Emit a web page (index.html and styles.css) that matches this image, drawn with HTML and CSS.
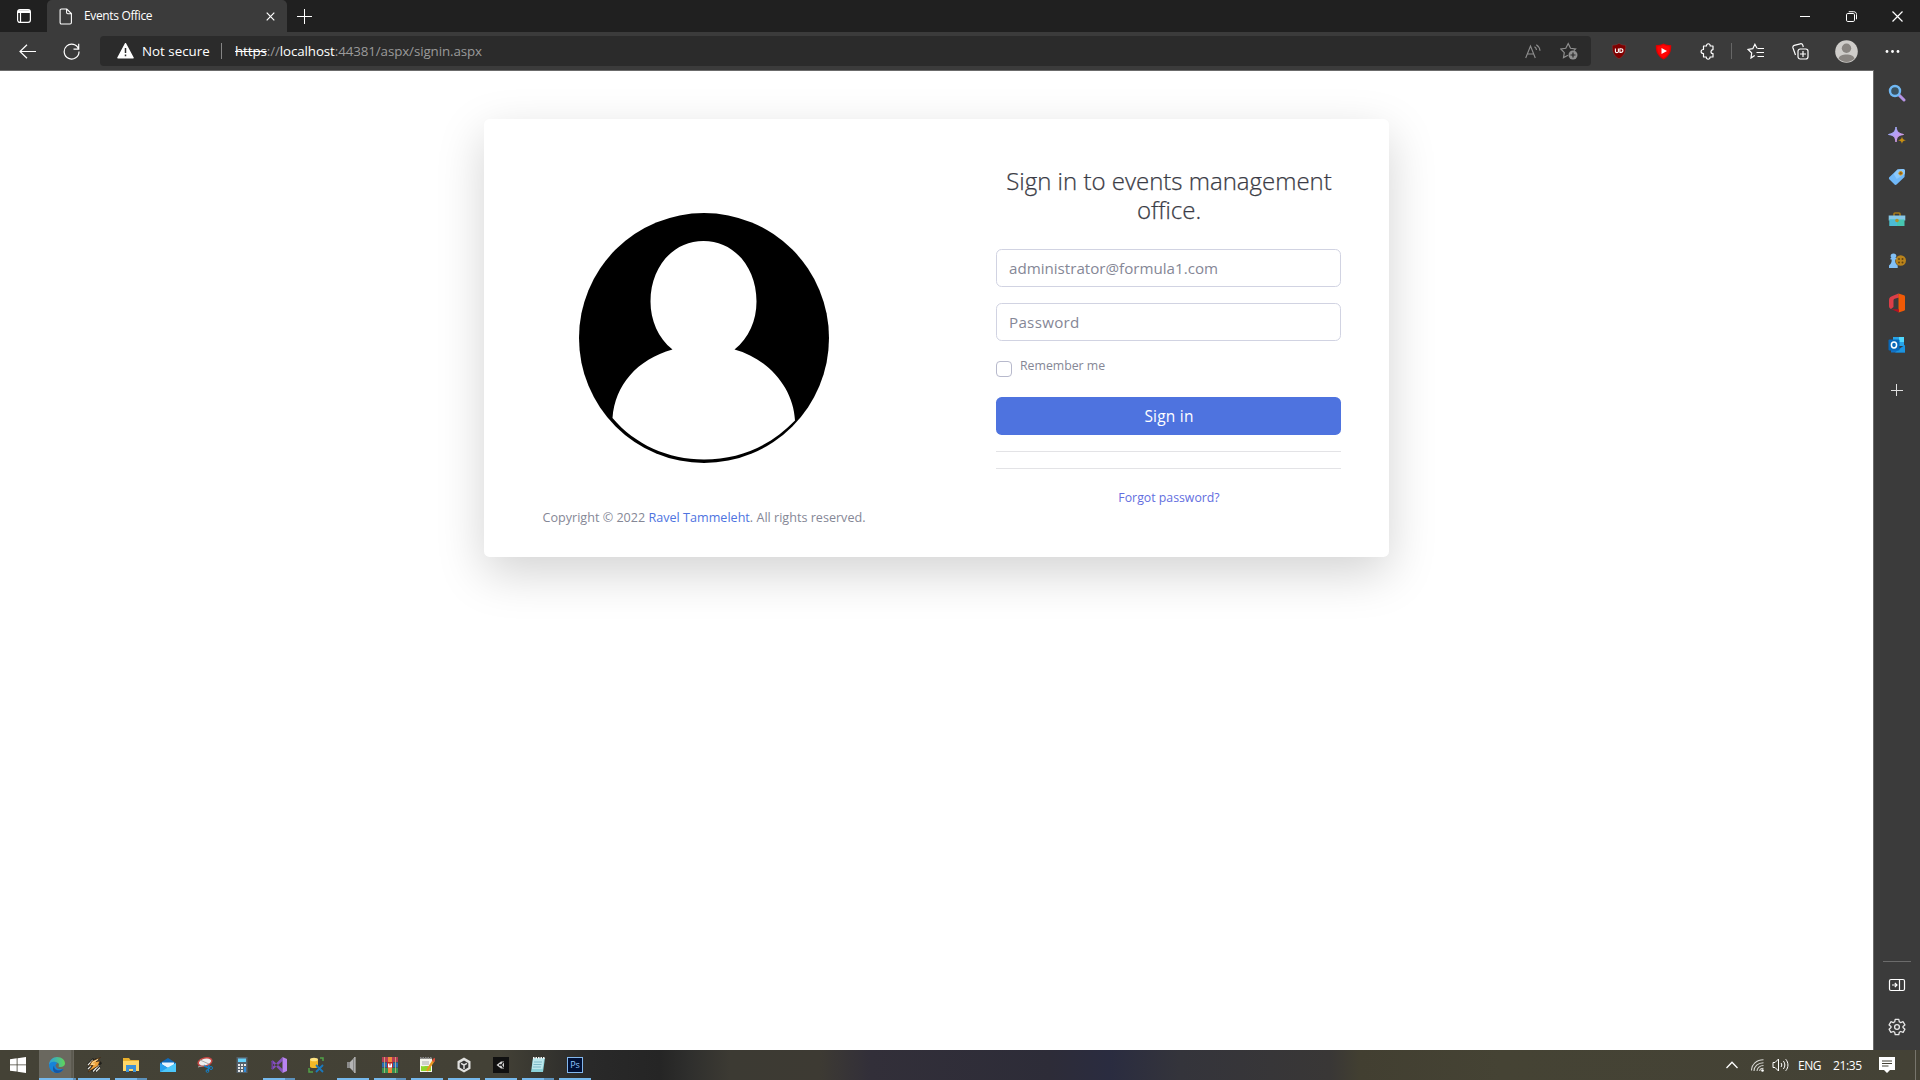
FILE: index.html
```html
<!DOCTYPE html>
<html lang="en">
<head>
<meta charset="utf-8">
<title>Events Office</title>
<link rel="stylesheet" href="styles.css">
</head>
<body>
<div class="screen">
  <header class="tabstrip">
    <div class="workspace"><svg width="16" height="16" viewBox="0 0 16 16" fill="none" stroke="#fff" stroke-width="1.2"><rect x="1.6" y="1.6" width="12.8" height="12.8" rx="2.3"/><path d="M2 3h12M2 4.2h12" stroke-width="1.6"/><path d="M4.5 5v9"/></svg></div>
    <div class="tab">
      <svg width="14" height="17" viewBox="0 0 14 17" fill="none" stroke="#fff" stroke-width="1.1"><path d="M2.5 1h5.3L12.4 5.6v9c0 .8-.5 1.4-1.4 1.4H2.5C1.600 16 1.100 15.400 1.100 14.600V2.400C1.100 1.600 1.600 1 2.500 1zM7.600 1v3.600c0 .8.5 1.200 1.200 1.200h3.600"/></svg>
      <span class="tab-title">Events Office</span>
      <svg width="9" height="9" viewBox="0 0 9 9" stroke="#fff" stroke-width="1.2"><path d="M.7.7l7.600 7.600M8.300.7L.7 8.300"/></svg>
    </div>
    <svg class="new-tab" width="15" height="15" viewBox="0 0 15 15" stroke="#fff"><path d="M7.500 0v15M0 7.500h15"/></svg>
    <div class="window-controls">
      <span><svg width="10" height="11" viewBox="0 0 10 11" stroke="#fff"><path d="M0 5.500h10"/></svg></span>
      <span><svg width="11" height="11" viewBox="0 0 11 11" fill="none" stroke="#fff"><rect x=".5" y="2.500" width="8" height="8" rx="1.300"/><path d="M2.700.7h5c1.700 0 2.800 1.100 2.800 2.800v4.800"/></svg></span>
      <span><svg width="11" height="11" viewBox="0 0 11 11" stroke="#fff" stroke-width="1.200"><path d="M.5.500l10 10M10.500.5l-10 10"/></svg></span>
    </div>
  </header>

  <nav class="toolbar">
    <div class="nav-button"><svg width="17" height="15" viewBox="0 0 17 15" fill="none" stroke="#fff" stroke-width="1.200"><path d="M17 7.500H1M8 .7L1 7.500l7 6.800"/></svg></div>
    <div class="nav-button"><svg width="17" height="17" viewBox="0 0 17 17" fill="none" stroke="#fff" stroke-width="1.200"><path d="M15.600 6.200A7.400 7.400 0 1 0 16 8.500M15.700.8v5.400h-5.200"/></svg></div>
    <div class="address">
      <svg width="17" height="16" viewBox="0 0 17 16"><path d="M8.500.8L16 14.800H1z" fill="#fff" stroke="#fff" stroke-width="1.600" stroke-linejoin="round"/><path d="M8.500 5v5M8.500 11.500v1.800" stroke="#2b2b2b" stroke-width="1.500"/></svg>
      <span class="not-secure">Not secure</span>
      <i class="address-divider"></i>
      <span class="url"><s>https</s>://<b>localhost</b>:44381/aspx/signin.aspx</span>
      <span class="address-icons">
        <svg width="16" height="15" viewBox="0 0 16 15" fill="none" stroke="#8f8f8f" stroke-width="1.100"><path d="M.7 14L5.500 2l4.800 12M2.300 10h6.400M9.500 2.700c1.300.8 1.900 1.900 2 3.300M11.300.8c2.300 1.500 3.500 3.500 3.700 6"/></svg>
        <svg width="18" height="18" viewBox="0 0 18 18" fill="none" stroke="#8f8f8f" stroke-width="1.200"><path d="M8 13.300l-4.500 2.300.8-5L.8 7l5-.7L8.200 1.500l2.300 4.800 5 .7-1.600 1.500"/><circle cx="13" cy="13" r="4.500" fill="#8f8f8f" stroke="none"/><path d="M13 10.500v5M10.500 13h5" stroke="#2b2b2b"/></svg>
      </span>
    </div>
    <div class="extensions">
      <span><svg width="16" height="16" viewBox="0 0 16 16"><path d="M8 .3c1.700 1.300 4 1.900 6.700 1.900.3 6.300-1 10.500-6.700 13.600C2.300 12.700 1 8.500 1.300 2.200 4 2.200 6.300 1.600 8 .3z" fill="#800000" stroke="#6e4a4a" stroke-width=".5"/><path d="M4.400 5.500v3c0 1.500 3 1.500 3 0v-3M8.900 5.700v3.700h1c2.700 0 2.700-3.700 0-3.700z" fill="none" stroke="#fff" stroke-width="1.100"/></svg></span>
      <span><svg width="17" height="17" viewBox="0 0 17 17"><path d="M8.500.5c2 1 4.500 1.700 7.700 1.700.2 6.500-1.500 10.600-7.700 14.300C2.300 12.800.6 8.700.8 2.200c3.200 0 5.700-.7 7.700-1.700z" fill="#e00000"/><path d="M8.500 2c2 .9 4 1.300 6.300 1.400 0 5-1.300 8.500-6.300 11.600C3.500 11.900 2.200 8.400 2.200 3.400 4.500 3.300 6.500 2.900 8.500 2z" fill="#ff0505"/><path d="M6.500 5l5.500 3-5.500 3z" fill="#fff"/></svg></span>
      <span><svg width="17" height="17" viewBox="0 0 17 17" fill="none" stroke="#fff" stroke-width="1.200" stroke-linejoin="round"><path d="M4.500 3h3c-.3-3 4-3 3.700 0H14v3.600c-2.700.2-2.700 4 0 4V14h-3c.3 3-4 3-3.700 0H4.500v-3.500C1.300 10.500 1.300 6.500 4.500 6.500V3z"/></svg></span>
      <i class="toolbar-divider"></i>
      <span class="favorites"><svg width="18" height="16" viewBox="0 0 18 16" fill="none" stroke="#fff" stroke-width="1.200"><path d="M7.700 12.400L4 15l.7-5L1.200 6.500l4.600-.8L7.900 1.300l2.100 3.900M10.500 5.500H17M9.500 9.500H17M10.500 13.500H17"/></svg></span>
      <span><svg width="17" height="17" viewBox="0 0 17 17" fill="none" stroke="#fff" stroke-width="1.200"><rect x="6" y="6" width="10" height="10" rx="2.200"/><path d="M11 8v6M8 11h6M3.500 12L1 5c-.4-1.300.2-2.200 1.200-2.600l6-1.600c1.300-.3 2.200.2 2.600 1.300l.5 1.900"/></svg></span>
      <span class="profile"><svg width="23" height="23" viewBox="0 0 23 23"><circle cx="11.500" cy="11.500" r="11.300" fill="#cfcdca"/><circle cx="11.500" cy="8.300" r="4.700" fill="#898581"/><path d="M3.500 18.500c1-5.500 15-5.500 16 0a11 11 0 0 1-16 0z" fill="#898581"/></svg></span>
      <span><svg width="15" height="5" viewBox="0 0 15 5" fill="#fff"><circle cx="2" cy="2.500" r="1.400"/><circle cx="7.500" cy="2.500" r="1.400"/><circle cx="13" cy="2.500" r="1.400"/></svg></span>
    </div>
  </nav>

  <div class="workarea">
    <main class="page">
      <section class="card">
        <div class="card-brand">
          <svg class="avatar" width="250" height="250" viewBox="0 0 250 250"><circle cx="125" cy="125" r="125"/><path d="M93.500 136.500C79 125 71.500 107 71.500 88.500 71.500 54 94 28 124.500 28s53 26 53 60.500c0 19-7.500 36.500-22 48C189 145.500 214.500 175 216 207.500c-24 25-55 39-91 39-36 0-69-15-91.500-41.500C36 172 58 146.500 93.500 136.500z" fill="#fff"/></svg>
          <p class="copyright">Copyright © 2022 <a>Ravel Tammeleht</a>. All rights reserved.</p>
        </div>
        <div class="card-form">
          <h1>Sign in to events management office.</h1>
          <div class="field field-email">administrator@formula1.com</div>
          <div class="field field-password">Password</div>
          <div class="remember"><i class="checkbox"></i><span>Remember me</span></div>
          <div class="submit">Sign in</div>
          <hr><hr>
          <a class="forgot">Forgot password?</a>
        </div>
      </section>
    </main>

    <aside class="sidebar">
      <svg width="18" height="18" viewBox="0 0 18 18" fill="none"><path d="M11 11l5 5" stroke="#b693e4" stroke-width="3" stroke-linecap="round"/><circle cx="7" cy="7" r="5" stroke="#70b8f4" stroke-width="2.400" fill="#3b5361"/></svg>
      <svg width="18" height="18" viewBox="0 0 18 18"><defs><linearGradient id="spark" x2="1" y2="1"><stop stop-color="#8cbcff"/><stop offset=".5" stop-color="#b99cf5"/><stop offset="1" stop-color="#e69cd5"/></linearGradient></defs><path d="M8 1c1 5 2 6 7.500 7.500-5.500 1-6.500 2-7.500 7.500-1-5.500-2-6.500-7.500-7.500C6 7 7 6 8 1z" fill="url(#spark)" stroke="url(#spark)" stroke-linejoin="round"/><path d="M14 10.500c.6 2.600 1 3.100 4 3.800-3 .7-3.400 1.200-4 3.700-.6-2.500-1-3-4-3.700 3-.7 3.400-1.200 4-3.800z" fill="#c99012"/></svg>
      <svg width="18" height="18" viewBox="0 0 18 18"><path d="M9.500 1.500L15 1c1 0 2 .8 2 2l-.5 6-7.700 7.300c-.8.800-1.800.8-2.500 0L1.500 11.500c-.8-.8-.8-1.700 0-2.500z" fill="#70b8f8"/><path d="M9.500 1.500L15 1c1 0 2 .8 2 2l-.3 3-8 5-3-5z" fill="#8cc9fc"/><circle cx="12.700" cy="5.300" r="1.800" fill="#8d611a" stroke="#d99719"/></svg>
      <svg width="18" height="18" viewBox="0 0 18 18"><path d="M6 6V4c0-.7.300-1 1-1h4c.7 0 1 .3 1 1v2" fill="none" stroke="#a77b18" stroke-width="1.600"/><path d="M.7 5.500h16.600v5H.7z" fill="#86c8e8"/><path d="M1.500 9.500h15V16h-15z" fill="#47c6b0"/><path d="M1.500 9.500H9V16H1.500z" fill="#4cbad4"/><circle cx="9" cy="10.500" r="1.800" fill="#b1912b"/></svg>
      <svg width="18" height="18" viewBox="0 0 18 18"><circle cx="12.700" cy="8.500" r="5.300" fill="#b9831b"/><g fill="#634411"><circle cx="11" cy="7" r="1"/><circle cx="14.500" cy="7" r="1"/><circle cx="11" cy="10.500" r="1"/><circle cx="14.500" cy="10.500" r="1"/></g><path d="M5.500 1.500c3 0 3.700 3 1.800 4.500h1v1.500H7c0 3 .7 4.500 2.700 6V16H1v-2.500c2-1.500 2.700-3 2.700-6H2.500V6h1C1.800 4.500 2.500 1.500 5.500 1.500z" fill="#82c0f5"/></svg>
      <svg width="18" height="20" viewBox="0 0 18 20"><path d="M10.500.5L5 2.700C2.500 3.700 1 4.500 1 7v6c0 1.500.6 2.400 2 3l2.500-2V7.500c0-1 .3-1.500 1.200-1.800L11 4.500z" fill="#dc3e48"/><path d="M10.500.5L16 2.300c.7.300 1 .8 1 1.500v12.400c0 .7-.3 1.200-1 1.500L10.500 19.500z" fill="#f05a06"/><path d="M3.500 16.300H11v3.200z" fill="#b31224"/></svg>
      <svg width="18" height="18" viewBox="0 0 18 18"><path d="M5 1h11v9H5z" fill="#28a4e8"/><path d="M11 1h5v5h-5z" fill="#50d9ff"/><path d="M3 9l7.500 4L17 9v7.500H3z" fill="#1273c8"/><path d="M17 9v7.500H7z" fill="#1b94df"/><rect x=".5" y="3.500" width="11" height="11" rx="1" fill="#0968b8"/><ellipse cx="6" cy="9" rx="2.600" ry="2.900" fill="none" stroke="#fff" stroke-width="1.500"/></svg>
      <svg class="sidebar-add" width="12" height="12" viewBox="0 0 12 12" stroke="#e0e0e0"><path d="M5.500 0v12M0 6.500h12"/></svg>
      <i class="sidebar-rule"></i>
      <svg width="18" height="14" viewBox="0 0 18 14" fill="none" stroke="#fff" stroke-width="1.200"><rect x="1.500" y="1.500" width="15" height="11" rx="1.500"/><path d="M11.500 1.500v11M4 7h5M6.800 4.800L9 7 6.800 9.200"/></svg>
      <svg width="18" height="18" viewBox="0 0 18 18" fill="none" stroke="#e8e8e8" stroke-width="1.300" stroke-linejoin="round"><path d="M7.200 1.300h3.600l.5 2.500 1.400.8 2.400-.9 1.800 3.200L15 8.500v1l1.900 1.700-1.800 3.200-2.400-.9-1.400.8-.5 2.400H7.200l-.5-2.400-1.400-.8-2.400.9-1.800-3.200L3 9.500v-1L1.100 6.900l1.800-3.200 2.400.9 1.400-.8z"/><circle cx="9" cy="9" r="2.400"/></svg>
    </aside>
  </div>

  <footer class="taskbar">
    <div class="start"><svg width="16" height="16" viewBox="0 0 16 16" fill="#fff"><path d="M0 2.200l6.700-.9v6.200H0zM7.500 1.200L16 0v7.500H7.500zM0 8.300h6.700v6.300L0 13.700zM7.500 8.300H16V16l-8.500-1.200z"/></svg></div>
    <div class="task active"><svg width="16" height="16" viewBox="0 0 16 16"><defs><linearGradient id="edge" x2="1"><stop stop-color="#2b9fe0"/><stop offset="1" stop-color="#61d657"/></linearGradient></defs><path d="M0 8C0 3 4 0 8 0c5 0 8 3 8 6.500 0 3-4 4.500-6.500 3 1-1.700.5-4-2.500-4C4 5.500 1 7 0 8z" fill="url(#edge)"/><path d="M0 8C1 4 7 4 8.500 6.500 5 7 6 13.500 14.500 12 13 14.500 10.500 16 8 16c-5 0-8-4-8-8z" fill="#1684d9"/><path d="M5.200 8.500C4.500 12 8 15 14.500 12c-1.500 2.500-4 4-6.500 4-4 0-5-5-2.800-7.500z" fill="#1557a5"/></svg></div>
    <div class="task open"><svg width="16" height="16" viewBox="0 0 16 16"><path d="M2 8l6-6M2 12L11 2M6 14.500L15 5M9 14.500l5-5" stroke="#20201c" stroke-width="3"/><path d="M2 8l5-5M2 12L5 9M7 14.500L13 8M10 14.500l4-4" stroke="#e6e6df" stroke-width="1.300"/><path d="M14.500.5L6 4 3 9l4-.5L2 15l10-6 2-5-4 .5z" fill="#efa33c" stroke="#3e2612" stroke-width=".7"/><path d="M12 2.500L7 5 5.500 7.500 9 7" fill="none" stroke="#ffe0a0"/></svg></div>
    <div class="task open multi"><svg width="16" height="16" viewBox="0 0 16 16"><path d="M0 1h6l1.500 2H16v11H0z" fill="#eab02c"/><path d="M0 4h16v10H0z" fill="#ffd667"/><path d="M3 8h10v7h-3v-3H6v3H3z" fill="#3d91d6"/></svg></div>
    <div class="task"><svg width="16" height="16" viewBox="0 0 16 16"><path d="M0 6l8-5 8 5v9H0z" fill="#1069b8"/><path d="M2 5.500h12v2L8 11 2 7.500z" fill="#e8f4ff"/><path d="M0 6l8 5-8 4z" fill="#27a0ee"/><path d="M0 15L16 6v9z" fill="#4cc7fa"/></svg></div>
    <div class="task"><svg width="16" height="16" viewBox="0 0 16 16"><ellipse cx="8" cy="5" rx="7" ry="4" transform="rotate(-15 8 5)" fill="#eee" stroke="#c44743" stroke-width="1.500"/><path d="M3 3l9 4M1 10l7-2" stroke="#aaa"/><path d="M7 9l6 2M12 8l-1 6" stroke="#1680c5" stroke-width="1.500"/><circle cx="14" cy="11" r="1.500" fill="none" stroke="#1680c5"/><circle cx="10.500" cy="14" r="1.400" fill="none" stroke="#1680c5"/></svg></div>
    <div class="task"><svg width="16" height="16" viewBox="0 0 16 16"><path d="M2.500 0h11v16h-11z" fill="#55616b"/><path d="M4 1.500h8V5H4z" fill="#65d1fa"/><g fill="#e8e8e8"><path d="M4 7h2v2H4zM7 7h2v2H7zM4 10h2v2H4zM7 10h2v2H7zM4 13h2v2H4zM7 13h2v2H7zM10 7h2v2h-2z"/></g><path d="M10 10h2v5h-2z" fill="#2e8bdc"/></svg></div>
    <div class="task open multi"><svg width="16" height="16" viewBox="0 0 16 16"><path d="M11.500 0v4L2 12.500.5 12v-1zM11.500 16v-4L2 3.500.5 4v1z" fill="#8351bd"/><path d="M.5 4L2 3.500v9L.5 12z" fill="#6b3ca1"/><path d="M11.500 0L16 2v12l-4.500 2z" fill="#b983f1"/></svg></div>
    <div class="task"><svg width="16" height="16" viewBox="0 0 16 16"><path d="M2 2.500v7c0 2 8 2 8 0v-7z" fill="#f2b928"/><ellipse cx="6" cy="2.500" rx="4" ry="1.800" fill="#ffe382"/><path d="M12 1h3v3M1 11v4h4" fill="none" stroke="#51a348" stroke-width="1.500"/><path d="M8 8l7 7M15 8l-7 7" stroke="#1979bf" stroke-width="1.800"/></svg></div>
    <div class="task open"><svg width="16" height="16" viewBox="0 0 16 16"><path d="M2 5h3v6H2z" fill="#8c8c8c"/><path d="M5 5l5-5v16l-5-5z" fill="#b5b5b5"/><path d="M8 2l2-2v16l-2-2z" fill="#8a8a8a"/><path d="M10 0v16" stroke="#d0d0d0"/></svg></div>
    <div class="task open multi"><svg width="16" height="16" viewBox="0 0 16 16"><path d="M0 0h16v5H0z" fill="#b43b54"/><path d="M0 5.500h16v5H0z" fill="#286db7"/><path d="M0 11h16v5H0z" fill="#36924e"/><path d="M6 0h4v16H6z" fill="#f0883a"/><path d="M5 5h6v6H5z" fill="#b4292b"/><path d="M6 6.500h1.500v2h1v-2H10v4H6z" fill="#fff"/><path d="M2.500 0v16M13.500 0v16" stroke="#d9c47e" stroke-width=".7"/></svg></div>
    <div class="task open"><svg width="16" height="16" viewBox="0 0 16 16"><path d="M1 1.500h12V15H1z" fill="#f5f5ec"/><path d="M2 9c4 1 7-1 10 1v4H2z" fill="#8ed62c"/><path d="M1 1h12" stroke="#888" stroke-width="2" stroke-dasharray="1.500 1"/><path d="M3 5h7M3 7h7" stroke="#aaa"/><path d="M15 3l-6 9-1 2" stroke="#e99820" stroke-width="2.300"/><path d="M16 1.500l-2 3" stroke="#d94e3b" stroke-width="2.300"/></svg></div>
    <div class="task open"><svg width="16" height="16" viewBox="0 0 16 16"><path d="M8 .5l6.500 3.700v7.600L8 15.500l-6.500-3.700V4.200z" fill="#e1e1df"/><path d="M8 3.500l4.300 2.400v4.700L8 13l-4.300-2.400V5.900z" fill="#353535"/><path d="M8 8v4M8 8L5 6.300M8 8l3-1.700" stroke="#ddd" stroke-width="1.500"/></svg></div>
    <div class="task open"><svg width="16" height="16" viewBox="0 0 16 16"><path d="M0 0h16v16H0z" fill="#101010"/><path d="M3.500 8L8 4.500h3v7H8z" fill="#d6d6d6"/><path d="M8.500 8L6 8M8.500 8l2-3M8.500 8l2 3" stroke="#161616" stroke-width="1.300"/></svg></div>
    <div class="task open multi"><svg width="16" height="16" viewBox="0 0 16 16"><path d="M3 1h12l-2 14H1z" fill="#8bd1d8"/><path d="M3 2h11l-1.500 10H2z" fill="#bde8ed"/><path d="M4 5h8M3.500 7.500h8M3 10h8" stroke="#7db9c8"/><path d="M3 1h12" stroke="#f3f3f3" stroke-width="2" stroke-dasharray="1.500 1"/></svg></div>
    <div class="task open photoshop">Ps</div>
    <div class="tray">
      <svg class="tray-up" width="12" height="8" viewBox="0 0 12 8" fill="none" stroke="#fff" stroke-width="1.300"><path d="M.5 7L6 1.300 11.500 7"/></svg>
      <svg class="tray-net" width="13" height="13" viewBox="0 0 13 13" fill="none" stroke="#d8d8d4" stroke-width="1.100"><path d="M.5 11.500C.5 5.500 5.500.7 12.500.7M3 12C3 7.500 7 3.700 12.500 3.700M6 12c0-3 3-5.500 6.500-5.500M8.700 12c0-1.500 1.500-2.800 3.800-2.800"/><circle cx="11.500" cy="11.500" r="1.300" fill="#fff" stroke="none"/></svg>
      <svg class="tray-sound" width="17" height="14" viewBox="0 0 17 14" fill="none" stroke="#fff"><path d="M1 4.500h2L6.500 1v12L3 9.500H1zM9 5c1 1.200 1 2.800 0 4M11.300 3c2 2.400 2 5.600 0 8M13.700 1.200c3 3.500 3 8.100 0 11.600"/></svg>
      <span class="lang">ENG</span>
      <span class="clock">21:35</span>
      <svg class="notify" width="16" height="16" viewBox="0 0 16 16"><path d="M0 0h16v13h-5l-3 3-3-3H0z" fill="#fff"/><path d="M3 4h10M3 6.500h10M3 9h6.500" stroke="#444236"/></svg>
    </div>
  </footer>
</div>
</body>
</html>
```
FILE: styles.css
```css
* { box-sizing: border-box; }
body { margin: 0; background: #fff; overflow: hidden; font-family: "Open Sans", "Noto Sans", sans-serif; }
svg { display: block; flex: none; }
.screen { width: 1920px; height: 1080px; display: flex; flex-direction: column; }

.tabstrip { height: 32px; flex: none; background: #202020; display: flex; align-items: center; color: #fff; }
.workspace { width: 47px; padding-left: 16px; }
.tab { width: 240px; height: 32px; background: #3b3b3b; border-radius: 5px 5px 0 0; display: flex; align-items: center; padding: 0 12px 0 12px; }
.tab-title { flex: 1; margin-left: 11px; font-size: 12px; letter-spacing: -.35px; line-height: 16px; white-space: nowrap; }
.new-tab { margin-left: 10px; }
.window-controls { margin-left: auto; display: flex; }
.window-controls span { width: 46px; display: flex; justify-content: center; }

.toolbar { height: 38px; flex: none; background: #3b3b3b; display: flex; align-items: center; }
.nav-button { width: 44px; display: flex; justify-content: center; }
.nav-button:first-child { margin-left: 5px; }
.address { width: 1491px; height: 30px; margin-left: 7px; padding: 0 13px 0 17px; background: #2b2b2b; border-radius: 4px; display: flex; align-items: center; color: #fff; font-size: 13.350px; white-space: nowrap; }
.not-secure { margin-left: 8px; width: 68px; }
.address-divider { width: 1px; height: 16px; margin: 0 13px 0 11px; background: #858585; }
.url { color: #9a9a9a; letter-spacing: -.1px; }
.url s { color: #fff; }
.url b { color: #fff; font-weight: 400; }
.address-icons { display: flex; align-items: center; gap: 19px; margin-left: auto; }
.extensions { display: flex; align-items: center; margin-left: 6px; }
.extensions span { width: 44px; display: flex; justify-content: center; }
.toolbar-divider { width: 1px; height: 16px; background: #666; margin: 0 2px; }
.extensions .profile { width: 48px; }

.workarea { flex: 1; display: flex; min-height: 0; background: #3b3b3b; }
.page { width: 1874px; border-top: 1px solid #6b6b6b; border-right: 1px solid #6b6b6b; background: #fff; padding: 48px 0 0 484px; }
.card { width: 905px; height: 438px; border-radius: 5.600px; background: #fff; box-shadow: 0 16px 48px rgba(0, 0, 0, .175); display: flex; }
.card-brand { width: 440px; padding-top: 94px; display: flex; flex-direction: column; align-items: center; color: #858796; }
.avatar { display: block; }
.copyright { margin: 45px 0 0; font-size: 12.600px; line-height: 20px; white-space: nowrap; }
.copyright a { color: #4e73df; }
.card-form { width: 465px; padding: 48px 48px 0 72px; display: flex; flex-direction: column; color: #858796; }
h1 { margin: 0 0 24px; padding-left: 1px; font-size: 24px; line-height: 28.800px; font-weight: 300; color: #3a3b45; -webkit-text-stroke: .25px #3a3b45; text-align: center; }
.field { height: 38px; border: 1px solid #d1d3e2; border-radius: 5.600px; padding: 0 12px; margin-bottom: 16px; font-size: 15.150px; line-height: 37px; color: #858796; }
.field-password { letter-spacing: .3px; }
.remember { display: flex; height: 40px; padding-top: 4px; gap: 8px; font-size: 12.300px; line-height: 9px; }
.checkbox { width: 16px; height: 16px; border: 1px solid #b7b9cc; border-radius: 4px; }
.submit { height: 38px; padding-left: 1px; background: #4e73df; border-radius: 5.600px; color: #fff; text-align: center; line-height: 38px; font-size: 15.500px; letter-spacing: .2px; }
hr { width: 100%; height: 1px; border: 0; background: #e3e3e6; margin: 16px 0 0; }
.forgot { margin-top: 19px; padding-left: 1px; text-align: center; font-size: 12.300px; line-height: 20px; color: #636ee0; }

.sidebar { width: 46px; display: flex; flex-direction: column; align-items: center; gap: 24px; padding-top: 14px; }
.sidebar svg:nth-child(6) { margin: -1px 0; }
.sidebar-add { margin: 6px 0 0; }
.sidebar-rule { width: 28px; height: 1px; background: #6b6b6b; margin-top: auto; margin-bottom: -8px; }
.sidebar svg:last-child { margin: 2px 0 14px; }

.taskbar { height: 30px; flex: none; display: flex; background: linear-gradient(90deg, #444236 0, #434136 500px, #292929 590px, #252525 660px, #2f2f2d 690px, #3c3a33 730px, #3d3a33 820px, #322f39 870px, #2d2c38 1050px, #2a2c40 1110px, #34343b 1180px, #393736 1330px, #423f31 1360px, #454334 1500px, #444236 1920px); color: #fff; }
.start { width: 39px; padding: 7px 0 0 10px; }
.task { width: 37px; height: 30px; padding: 7px 0 0 10px; border-bottom: 2px solid transparent; }
.open { border-image: linear-gradient(90deg, transparent 4px, #76b9ed 4px 32px, transparent 32px) 2; border-width: 0 0 2px; }
.open.multi { border-image-source: linear-gradient(90deg, transparent 4px, #76b9ed 4px 23px, #5c91bb 23px 32px, transparent 32px); }
.active { background: linear-gradient(90deg, #6a685f 32px, #504e43 33px, #66645b 34px 35px, transparent 35px); border-image: linear-gradient(90deg, #76b9ed 32px, #5c91bb 32px 35px, transparent 35px) 2; border-width: 0 0 2px; }
.photoshop { padding: 9px 11px 3px 10px; background: linear-gradient(#001036, #001036) 11px 8px / 14px 14px no-repeat, linear-gradient(#83b8ef, #83b8ef) 10px 7px / 16px 16px no-repeat; font-size: 9px; line-height: 12px; color: #91c8ff; text-align: center; }
.tray { margin-left: auto; display: flex; align-items: center; height: 30px; font-size: 12px; border-right: 1px solid #77756c; margin-right: 4px; }
.tray-net { margin-left: 13px; }
.tray-sound { margin-left: 8px; }
.lang { width: 23px; margin-left: 9px; letter-spacing: -.5px; }
.clock { width: 28px; margin-left: 12px; letter-spacing: -.4px; }
.notify { margin: 0 20px 0 18px; }
```
